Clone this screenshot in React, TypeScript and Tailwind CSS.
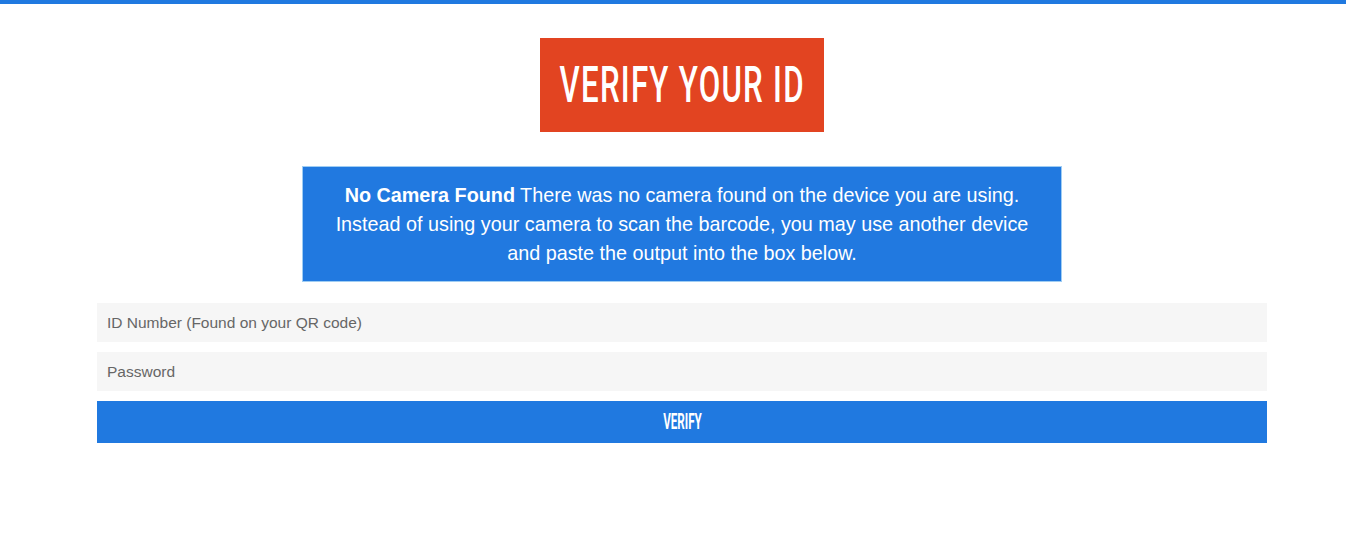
import React from "react";

export default function App() {
  return (
    <div className="min-h-[559px] bg-white" style={{ fontFamily: '"Liberation Sans", Arial, sans-serif' }}>
      <div className="h-[4px] bg-[#2079e0]" />
      <div className="ml-[97px] w-[1170px] flex flex-col items-center">
        <div className="mt-[34px] w-[284px] h-[94px] bg-[#e24421] flex items-center justify-center overflow-hidden">
          <span className="inline-block whitespace-nowrap text-white text-[50px] leading-none scale-x-[0.625] tracking-[2px] font-medium" style={{ fontFamily: 'Roboto, sans-serif' }}>
            VERIFY YOUR ID
          </span>
        </div>
        <div className="mt-[34px] w-[760px] h-[116px] bg-[#2179e0] border border-[#9fcdf3] pt-[14px] text-center text-white text-[19.8px] leading-[29px] whitespace-nowrap">
          <b>No Camera Found</b> There was no camera found on the device you are using.
          <br />
          Instead of using your camera to scan the barcode, you may use another device
          <br />
          and paste the output into the box below.
        </div>
        <form className="mt-[21px] w-full flex flex-col gap-[10px]">
          <input
            className="h-[39px] w-full bg-[#f6f6f6] px-[10px] text-[15.5px] text-[#555] placeholder:text-[#666] outline-none"
            placeholder="ID Number (Found on your QR code)"
          />
          <input
            type="password"
            className="h-[39px] w-full bg-[#f6f6f6] px-[10px] text-[15.5px] text-[#555] placeholder:text-[#666] outline-none"
            placeholder="Password"
          />
          <button type="button" className="h-[42px] w-full bg-[#2079e0] text-white flex items-center justify-center">
            <span className="inline-block text-[22px] leading-none scale-x-[0.53] font-bold" style={{ fontFamily: 'Roboto, sans-serif' }}>
              VERIFY
            </span>
          </button>
        </form>
      </div>
    </div>
  );
}
